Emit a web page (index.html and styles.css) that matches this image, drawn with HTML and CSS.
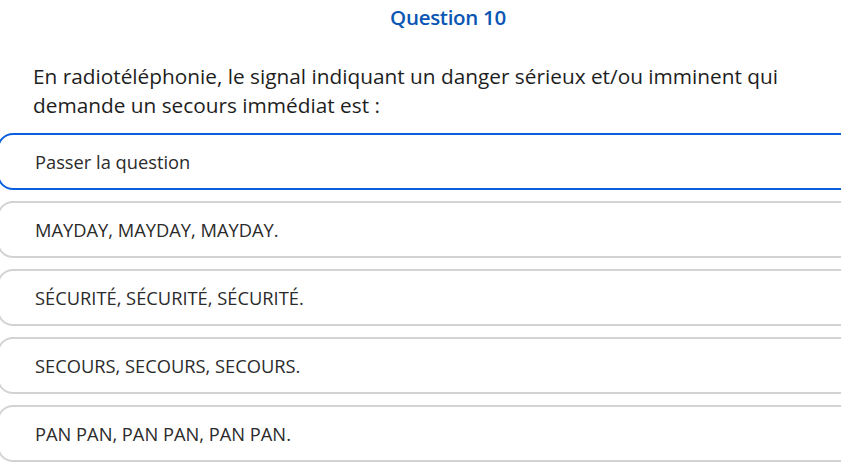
FILE: index.html
```html
<!DOCTYPE html>
<html lang="fr">
<head>
<meta charset="utf-8">
<title>Question 10</title>
<link rel="stylesheet" href="styles.css">
</head>
<body>
<div class="quiz">
  <h1 class="title">Question 10</h1>
  <p class="question">En radiotéléphonie, le signal indiquant un danger sérieux et/ou imminent qui<br>demande un secours immédiat est :</p>
  <div class="options">
    <div class="option selected">Passer la question</div>
    <div class="option">MAYDAY, MAYDAY, MAYDAY.</div>
    <div class="option">SÉCURITÉ, SÉCURITÉ, SÉCURITÉ.</div>
    <div class="option">SECOURS, SECOURS, SECOURS.</div>
    <div class="option">PAN PAN, PAN PAN, PAN PAN.</div>
  </div>
</div>
</body>
</html>
```
FILE: styles.css
```css
html, body {
  margin: 0;
  padding: 0;
  background: #ffffff;
  overflow: hidden;
}
body {
  font-family: "Open Sans", "Noto Sans", sans-serif;
  color: #222;
}
.quiz {
  margin-left: -3px;
  width: 902px;
}
.title {
  margin: 0;
  padding-top: 3px;
  text-align: center;
  font-size: 20.5px;
  font-weight: 600;
  color: #0a56b5;
  line-height: 28px;
  letter-spacing: -0.3px;
}
.question {
  margin: 31px 0 0 36px;
  font-size: 20.8px;
  line-height: 29px;
  color: #1e1e1e;
}
.options {
  margin-top: 13px;
  display: flex;
  flex-direction: column;
  gap: 11px;
}
.option {
  box-sizing: border-box;
  height: 57px;
  border: 2px solid #d3d3d3;
  border-radius: 16px;
  padding-left: 36px;
  display: flex;
  align-items: center;
  font-size: 18.3px;
  color: #2b2b2b;
}
.option.selected {
  border-color: #0a5fde;
}
```
